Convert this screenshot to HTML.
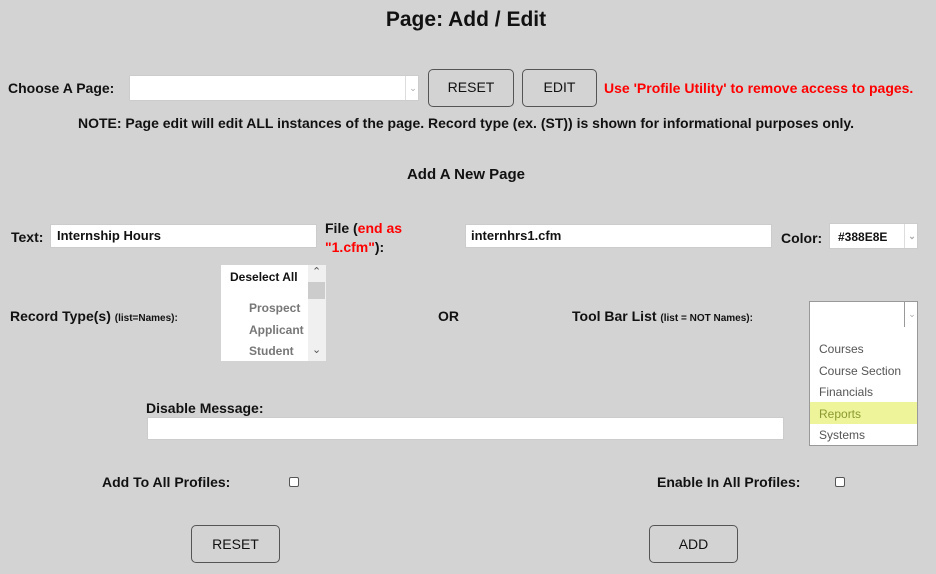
<!DOCTYPE html>
<html><head><style>
body{margin:0;width:936px;height:574px;background:#d3d3d3;font-family:"Liberation Sans",sans-serif;position:relative;overflow:hidden;color:#111}
.a{position:absolute;white-space:nowrap}
.b{font-weight:bold;font-size:14px}
.inp{position:absolute;background:#fff;border:1px solid #ccc;box-sizing:border-box}
.btn{position:absolute;border:1px solid #555;border-radius:5px;background:#d3d3d3;box-sizing:border-box;font-size:14px;text-align:center}
.red{color:#f00}
.chk{position:absolute;width:10px;height:10px;background:#fff;border:1px solid #555;border-radius:2px;box-sizing:border-box}
.dv{position:absolute;top:0;bottom:0;border-left:1px solid #ddd;width:14px;color:#aaa;font-size:9px;text-align:center;line-height:24px}
</style></head><body>
<div class="a" style="left:0;width:932px;text-align:center;top:8px;font-size:21px;font-weight:bold">Page: Add / Edit</div>
<div class="a b" style="left:8px;top:80px">Choose A Page:</div>
<div class="inp" style="left:129px;top:75px;width:290px;height:26px"><div class="dv" style="left:275px">&#8964;</div></div>
<div class="btn" style="left:428px;top:69px;width:86px;height:38px;line-height:34px">RESET</div>
<div class="btn" style="left:522px;top:69px;width:75px;height:38px;line-height:34px">EDIT</div>
<div class="a b red" style="left:604px;top:80px">Use 'Profile Utility' to remove access to pages.</div>
<div class="a b" style="left:0;width:932px;text-align:center;top:115px">NOTE: Page edit will edit ALL instances of the page. Record type (ex. (ST)) is shown for informational purposes only.</div>
<div class="a" style="left:0;width:932px;text-align:center;top:166px;font-size:15px;font-weight:bold">Add A New Page</div>
<div class="a b" style="left:11px;top:229px">Text:</div>
<div class="inp" style="left:50px;top:224px;width:267px;height:24px;font-size:13px;font-weight:bold;padding:3px 6px">Internship Hours</div>
<div class="a b" style="left:325px;top:219px;line-height:19px">File (<span class="red">end as</span><br><span class="red">"1.cfm"</span>):</div>
<div class="inp" style="left:465px;top:224px;width:307px;height:24px;font-size:13px;font-weight:bold;padding:3px 5px">internhrs1.cfm</div>
<div class="a b" style="left:781px;top:230px">Color:</div>
<div class="inp" style="left:829px;top:223px;width:89px;height:26px;font-size:12px;font-weight:bold;padding:6px 8px">#388E8E<div class="dv" style="left:74px">&#8964;</div></div>
<div class="a b" style="left:10px;top:308px">Record Type(s) <span style="font-size:10px">(list=Names):</span></div>
<div class="inp" style="left:221px;top:265px;width:105px;height:96px;border:none">
<div class="a b" style="left:9px;top:5px;font-size:12px">Deselect All</div>
<div class="a" style="left:28px;top:33px;font-size:12px;font-weight:bold;color:#777;line-height:21.5px">Prospect<br>Applicant<br>Student</div>
<div class="a" style="left:87px;top:0;width:18px;height:96px;background:#f0f0f0"></div>
<div class="a" style="left:87px;top:17px;width:17px;height:17px;background:#ccc"></div>
<div class="a" style="left:91px;top:0;font-size:11px;color:#555">&#8963;</div>
<div class="a" style="left:91px;top:78px;font-size:11px;color:#555">&#8964;</div>
</div>
<div class="a b" style="left:438px;top:308px">OR</div>
<div class="a b" style="left:572px;top:308px">Tool Bar List <span style="font-size:10px">(list = NOT Names):</span></div>
<div class="inp" style="left:809px;top:301px;width:109px;height:27px;border-color:#999"><div class="dv" style="left:94px;border-color:#999">&#8964;</div></div>
<div class="inp" style="left:809px;top:327px;width:109px;height:119px;border-color:#999;border-top:none">
<div class="a" style="left:0;top:75px;width:107px;height:22px;background:#eef49a"></div>
<div class="a" style="left:9px;top:12px;font-size:12px;color:#555;line-height:21.5px">Courses<br>Course Section<br>Financials<br><span style="color:#8a9a30">Reports</span><br>Systems</div>
</div>
<div class="a b" style="left:146px;top:400px">Disable Message:</div>
<div class="inp" style="left:147px;top:417px;width:637px;height:23px"></div>
<div class="a b" style="left:102px;top:474px">Add To All Profiles:</div>
<div class="chk" style="left:289px;top:477px"></div>
<div class="a b" style="left:657px;top:474px">Enable In All Profiles:</div>
<div class="chk" style="left:835px;top:477px"></div>
<div class="btn" style="left:191px;top:525px;width:89px;height:38px;line-height:36px">RESET</div>
<div class="btn" style="left:649px;top:525px;width:89px;height:38px;line-height:36px">ADD</div>
</body></html>
